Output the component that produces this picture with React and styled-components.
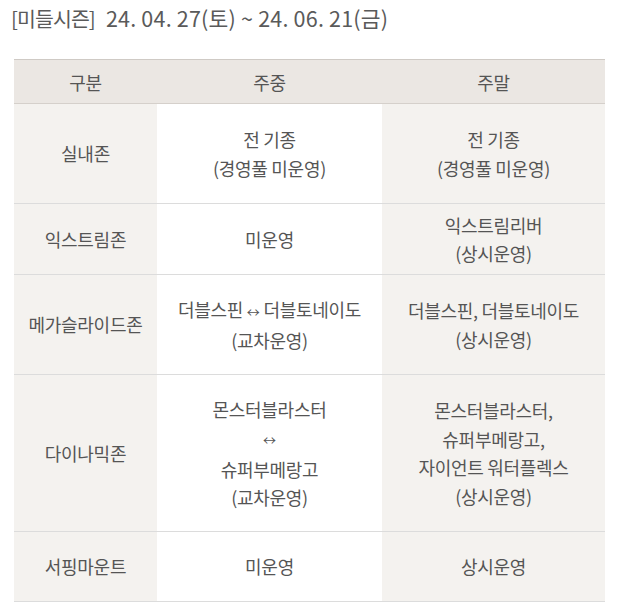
import React from "react";
import styled, { createGlobalStyle } from "styled-components";

const GlobalStyle = createGlobalStyle`
  html, body {
    margin: 0;
    padding: 0;
    background: #ffffff;
  }
  body {
    font-family: "Noto Sans CJK KR", "Noto Sans", sans-serif;
    color: #555;
  }
`;

const Page = styled.div`
  width: 618px;
  height: 612px;
  overflow: hidden;
  background: #fff;
`;

const Title = styled.h2`
  margin: 0;
  padding: 0 0 0 11px;
  height: 59px;
  display: flex;
  align-items: baseline;
  gap: 11px;
  line-height: 36px;
  font-weight: 400;
  color: #5a5a5a;
  white-space: pre;
`;

const Season = styled.span`
  font-size: 20.5px;
  letter-spacing: -0.9px;
`;

const Dates = styled.span`
  font-size: 21.5px;
  letter-spacing: 0.2px;
`;

const Table = styled.table`
  margin-left: 14px;
  width: 591px;
  border-collapse: collapse;
  table-layout: fixed;
  font-size: 18px;
  letter-spacing: -0.3px;
  color: #555;
`;

const HeadRow = styled.tr`
  height: 44px;
  background: #ebe7e3;
  border-top: 1px solid #cfcac5;
  border-bottom: 1px solid #d5d0cb;
`;

const HeadCell = styled.th`
  font-weight: 400;
  text-align: center;
  padding: 0;
  color: #555;
`;

const Row = styled.tr`
  height: ${(p) => p.$h}px;
  border-bottom: 1px solid #dcdcdc;
`;

const Cell = styled.td`
  text-align: center;
  vertical-align: middle;
  padding: 0;
  line-height: 28.5px;
  background: ${(p) => (p.$white ? "#ffffff" : "#f4f2ef")};
`;

const Arrow = styled.span`
  font-size: 13px;
  letter-spacing: 0;
`;

const rows = [
  { h: 100, name: "실내존", week: ["전 기종", "(경영풀 미운영)"], end: ["전 기종", "(경영풀 미운영)"] },
  { h: 71, name: "익스트림존", week: ["미운영"], end: ["익스트림리버", "(상시운영)"] },
  {
    h: 100,
    name: "메가슬라이드존",
    week: [<>더블스핀 <Arrow>↔</Arrow> 더블토네이도</>, "(교차운영)"],
    end: ["더블스핀, 더블토네이도", "(상시운영)"],
  },
  {
    h: 157,
    name: "다이나믹존",
    week: ["몬스터블라스터", <Arrow>↔</Arrow>, "슈퍼부메랑고", "(교차운영)"],
    end: ["몬스터블라스터,", "슈퍼부메랑고,", "자이언트 워터플렉스", "(상시운영)"],
  },
  { h: 70, name: "서핑마운트", week: ["미운영"], end: ["상시운영"] },
];

const Lines = ({ items }) =>
  items.map((t, i) => <div key={i}>{t}</div>);

export default function App() {
  return (
    <Page>
      <GlobalStyle />
      <Title>
        <Season>[미들시즌]</Season>
        <Dates>24. 04. 27(토) ~ 24. 06. 21(금)</Dates>
      </Title>
      <Table>
        <colgroup>
          <col style={{ width: 143 }} />
          <col style={{ width: 225 }} />
          <col />
        </colgroup>
        <thead>
          <HeadRow>
            <HeadCell>구분</HeadCell>
            <HeadCell>주중</HeadCell>
            <HeadCell>주말</HeadCell>
          </HeadRow>
        </thead>
        <tbody>
          {rows.map((r) => (
            <Row key={r.name} $h={r.h}>
              <Cell>{r.name}</Cell>
              <Cell $white>
                <Lines items={r.week} />
              </Cell>
              <Cell>
                <Lines items={r.end} />
              </Cell>
            </Row>
          ))}
        </tbody>
      </Table>
    </Page>
  );
}
